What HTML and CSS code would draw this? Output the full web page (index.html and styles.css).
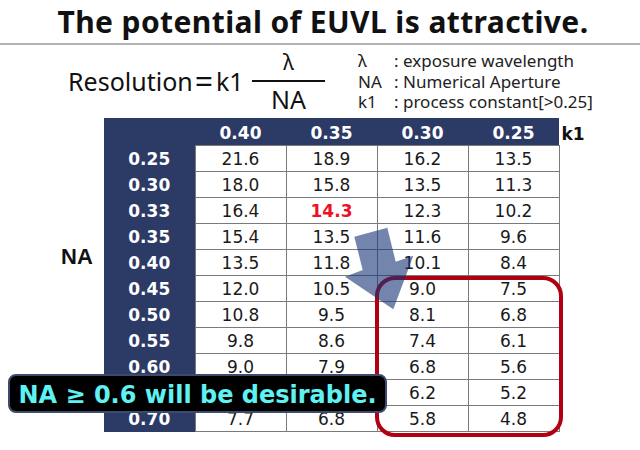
FILE: index.html
```html
<!DOCTYPE html>
<html>
<head>
<meta charset="utf-8">
<link rel="stylesheet" href="styles.css">
</head>
<body>
<div class="page">
  <h1 class="title">The potential of EUVL is attractive.</h1>
  <div class="formula-row">
    <div class="formula">
      <span class="lhs">Resolution</span><span class="eq">=</span><span class="k1">k1</span>
      <span class="frac">
        <span class="num">λ</span>
        <span class="bar"></span>
        <span class="den">NA</span>
      </span>
    </div>
    <div class="legend">
      <span class="key">λ</span><span class="desc">: exposure wavelength</span>
      <span class="key">NA</span><span class="desc">: Numerical Aperture</span>
      <span class="key">k1</span><span class="desc">: process constant[&gt;0.25]</span>
    </div>
  </div>
  <div class="table-row">
    <div class="na-label">NA</div>
    <table class="grid">
      <thead>
        <tr><th></th><th>0.40</th><th>0.35</th><th>0.30</th><th>0.25</th></tr>
      </thead>
      <tbody>
        <tr><th>0.25</th><td>21.6</td><td>18.9</td><td>16.2</td><td>13.5</td></tr>
        <tr><th>0.30</th><td>18.0</td><td>15.8</td><td>13.5</td><td>11.3</td></tr>
        <tr><th>0.33</th><td>16.4</td><td class="hl">14.3</td><td>12.3</td><td>10.2</td></tr>
        <tr><th>0.35</th><td>15.4</td><td>13.5</td><td>11.6</td><td>9.6</td></tr>
        <tr><th>0.40</th><td>13.5</td><td>11.8</td><td>10.1</td><td>8.4</td></tr>
        <tr><th>0.45</th><td>12.0</td><td>10.5</td><td>9.0</td><td>7.5</td></tr>
        <tr><th>0.50</th><td>10.8</td><td>9.5</td><td>8.1</td><td>6.8</td></tr>
        <tr><th>0.55</th><td>9.8</td><td>8.6</td><td>7.4</td><td>6.1</td></tr>
        <tr><th>0.60</th><td>9.0</td><td>7.9</td><td>6.8</td><td>5.6</td></tr>
        <tr><th>0.65</th><td>8.3</td><td>7.3</td><td>6.2</td><td>5.2</td></tr>
        <tr><th>0.70</th><td>7.7</td><td>6.8</td><td>5.8</td><td>4.8</td></tr>
      </tbody>
    </table>
    <div class="k1-label">k1</div>
  </div>

  <div class="focus-box"></div>
  <svg class="arrow" width="80" height="90" viewBox="0 0 80 90">
    <polygon points="14.3,11.7 47.3,2.7 55.7,36.7 73.3,30.7 53.3,84.3 5,51.7 22.7,45"/>
  </svg>
  <div class="callout">NA ≥ 0.6 will be desirable.</div>
</div>
</body>
</html>
```

FILE: styles.css
```css
html, body {
  margin: 0;
  padding: 0;
  background: #ffffff;
}

.page {
  position: relative;
  width: 640px;
  height: 450px;
  overflow: hidden;
  background: #ffffff;
  color: #111111;
}

.title {
  margin: 0;
  height: 43px;
  line-height: 44px;
  text-align: center;
  font-family: "Noto Sans", sans-serif;
  font-weight: 700;
  font-size: 30px;
  letter-spacing: 0.4px;
  color: #111111;
  border-bottom: 2px solid #b4b4b4;
  padding-left: 6px;
}

.formula-row {
  display: flex;
  height: 73px;
  align-items: flex-start;
}

.formula {
  display: flex;
  align-items: center;
  width: 257px;
  margin-left: 68px;
  height: 71.5px;
  font-family: "Noto Sans", sans-serif;
  font-size: 25px;
  line-height: 30px;
  color: #111111;
}

.eq {
  font-size: 32px;
  margin: 0 3px 0 2px;
}

.k1 {
  margin-right: 3px;
}

.frac {
  display: flex;
  flex-direction: column;
  align-items: center;
  width: 73px;
  margin-left: auto;
}

.num {
  height: 35px;
  line-height: 35px;
  font-size: 21px;
}

.bar {
  width: 73px;
  height: 1.5px;
  background: #111111;
}

.den {
  height: 35px;
  line-height: 35px;
  font-size: 25px;
}

.legend {
  display: grid;
  grid-template-columns: 36px auto;
  margin-left: 33px;
  margin-top: 6px;
  font-family: "Noto Sans", sans-serif;
  font-size: 17px;
  line-height: 20.5px;
  color: #222222;
}

.table-row {
  display: flex;
  align-items: flex-start;
}

.na-label {
  box-sizing: border-box;
  width: 104px;
  padding-left: 61px;
  margin-top: 126px;
  font-family: "Liberation Sans", sans-serif;
  font-weight: 700;
  font-size: 22px;
  line-height: 26px;
  color: #111111;
}

.grid {
  border-collapse: collapse;
  table-layout: fixed;
  width: 455px;
  font-family: "DejaVu Sans", sans-serif;
  font-size: 17px;
}

.grid th {
  width: 91px;
  padding: 1px 0 0 0;
  background: #2c3a66;
  color: #ffffff;
  font-weight: 700;
  text-align: center;
}

.grid thead th {
  height: 24px;
  padding-top: 3px;
}

.grid td {
  height: 24px;
  padding: 1px 0 0 0;
  text-align: center;
  color: #1a1a1a;
  border: 1px solid #7a7a7a;
  line-height: 23px;
}

.grid td.hl {
  color: #ee1122;
  font-weight: 700;
}

.k1-label {
  margin-left: 2px;
  margin-top: 6px;
  font-family: "DejaVu Sans", sans-serif;
  font-weight: 700;
  font-size: 17px;
  line-height: 20px;
  color: #111111;
}

.focus-box {
  position: absolute;
  left: 375px;
  top: 276px;
  width: 188px;
  height: 161px;
  box-sizing: border-box;
  border: 4px solid #b00012;
  border-radius: 20px;
}

.arrow {
  position: absolute;
  left: 340px;
  top: 225px;
}

.arrow polygon {
  fill: rgba(22, 50, 118, 0.6);
}

.callout {
  position: absolute;
  left: 8px;
  top: 374px;
  width: 379px;
  height: 39px;
  box-sizing: border-box;
  padding-top: 3px;
  background: #000000;
  border: 2px solid #3d4a6e;
  border-radius: 8px;
  text-align: center;
  font-family: "DejaVu Sans", sans-serif;
  font-weight: 700;
  font-size: 24px;
  line-height: 33px;
  color: #5ff2f2;
  white-space: nowrap;
}
```
